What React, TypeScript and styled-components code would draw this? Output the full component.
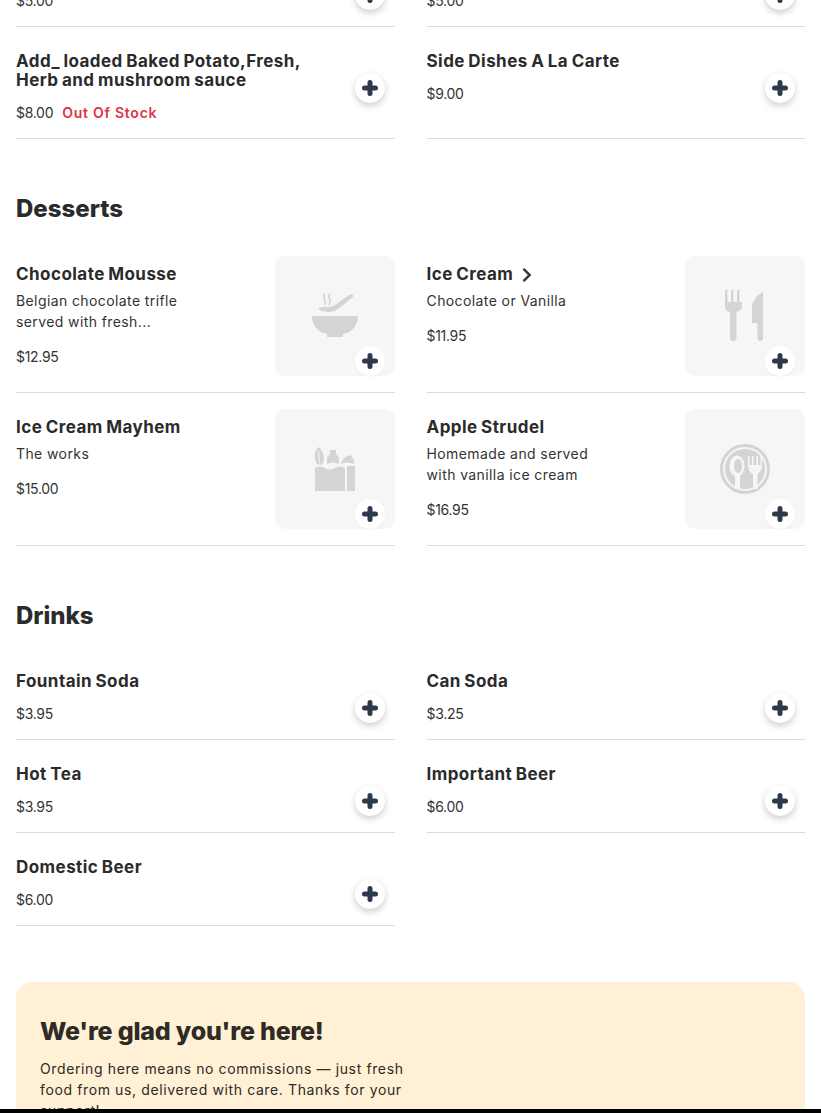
import React from 'react';
import styled, { createGlobalStyle } from 'styled-components';
import { FaChevronRight } from 'react-icons/fa';

const GlobalStyle = createGlobalStyle`
  html, body {
    margin: 0;
    height: 1113px;
    overflow: hidden;
    background: #fff;
    font-family: Inter, "Open Sans", "Liberation Sans", sans-serif;
  }
  * { box-sizing: border-box; }
`;

const Page = styled.div`
  margin-top: -66px;
  padding: 0 16px;
`;

const Section = styled.section`
  margin-bottom: 53px;
`;

const SectionTitle = styled.h2`
  margin: 0 0 15px;
  padding-top: 1px;
  font-size: 24px;
  line-height: 32px;
  font-weight: 800;
  color: #2b2b2b;
`;

const Grid = styled.div`
  display: grid;
  grid-template-columns: 1fr 1fr;
  column-gap: 32px;
`;

const Item = styled.article<{ $image?: boolean }>`
  position: relative;
  display: flex;
  justify-content: space-between;
  align-items: flex-start;
  border-bottom: 1px solid #dcdcdc;
  padding: ${(p) => (p.$image ? '16px 0' : '24px 0 15px')};
`;

const Info = styled.div<{ $image?: boolean }>`
  padding-top: ${(p) => (p.$image ? '8px' : '0')};
  min-width: 0;
`;

const Title = styled.h3`
  display: flex;
  align-items: center;
  gap: 6px;
  margin: 0 0 -2px;
  padding-top: 1px;
  max-width: 310px;
  min-height: 20px;
  font-size: 17px;
  line-height: 19px;
  font-weight: 700;
  letter-spacing: 0.45px;
  word-spacing: -1px;
  color: #2b2b2b;
`;

const Description = styled.p`
  margin: 8px 0 0;
  max-width: 185px;
  font-size: 14px;
  line-height: 21px;
  letter-spacing: 0.4px;
  color: #333;
`;

const PriceRow = styled.div`
  display: flex;
  gap: 9px;
  margin-top: 14px;
  font-size: 14px;
  line-height: 21px;
  letter-spacing: -0.3px;
  color: #333;
`;

const OutOfStock = styled.span`
  font-weight: 600;
  letter-spacing: 0.75px;
  color: #dc3545;
`;

const Thumb = styled.div`
  position: relative;
  flex: none;
  display: flex;
  align-items: center;
  justify-content: center;
  width: 120px;
  height: 120px;
  border-radius: 10px;
  background: #f6f6f6;
`;

const AddButton = styled.button<{ $onImage?: boolean }>`
  position: absolute;
  right: 10px;
  ${(p) => (p.$onImage ? 'bottom: 0;' : 'top: 46px;')}
  display: flex;
  align-items: center;
  justify-content: center;
  width: 30px;
  height: 30px;
  padding: 0;
  border: 0;
  border-radius: 50%;
  background: #fff;
  box-shadow: ${(p) => (p.$onImage ? '0 1px 3px rgba(0,0,0,0.04)' : '0 3px 7px rgba(0,0,0,0.2)')};
`;

const Arrow = styled(FaChevronRight)`
  font-size: 16px;
  color: #2c3a4b;
`;

const Banner = styled.aside`
  height: 200px;
  margin-top: 56px;
  padding: 32px 24px;
  border-radius: 16px;
  background: #fff0d6;
  color: #2e2a25;
`;

const BannerTitle = styled.h2`
  margin: 0 0 10px;
  font-size: 25px;
  line-height: 34px;
  font-weight: 800;
  letter-spacing: -0.2px;
`;

const BannerText = styled.p`
  margin: 0;
  max-width: 380px;
  font-size: 14px;
  line-height: 21px;
  letter-spacing: 0.62px;
`;

const BottomBar = styled.div`
  position: fixed;
  left: 0;
  right: 0;
  bottom: 0;
  height: 4px;
  background: #000;
`;

const IconSvg = styled.svg`
  width: 60px;
  height: 60px;
  fill: #d4d4d4;
`;

const PlusSvg = styled.svg`
  width: 18px;
  height: 18px;
  stroke: #2c3a4b;
  stroke-width: 5;
  stroke-linecap: round;
`;

function PlusIcon() {
  return (
    <PlusSvg viewBox="0 0 18 18">
      <path d="M9 3.5V14.5M3.5 9H14.5" />
    </PlusSvg>
  );
}

function BowlIcon() {
  return (
    <IconSvg viewBox="30 30 60 60">
      <path d="M37 60H83C83 70 76 77 68 78V81H52V78C44 77 37 70 37 60Z" />
      <path d="M43 52C49 50 56 52 60 49L74 39Q79 37 78 41L63 53C58 57 46 57 43 52Z" />
      <path d="M50 38C46 41 53 44 49 49M55 38C51 41 58 44 54 49" fill="none" stroke="#d4d4d4" strokeWidth="1.6" />
    </IconSvg>
  );
}

function CutleryIcon() {
  return (
    <IconSvg viewBox="30 30 60 60">
      <path d="M40 34H42.5V46H46V34H48.5V46H52V34H54.5V46H57V50C57 54 54 55 51.5 56V82Q51.5 85 48 85Q45 85 45 82V56C42 55 40 54 40 50Z" />
      <path d="M78 36V82Q78 85 75 85Q72.5 85 72.5 82V67H67V52C67 45 72 39 78 36Z" />
    </IconSvg>
  );
}

function GroceryIcon() {
  return (
    <IconSvg viewBox="30 30 60 60">
      <path d="M40 59Q45 56 50 59T60 59T70 59V82H40Z" />
      <path d="M72 57H80V82H72Z" />
      <path d="M42 55C38 49 40 42 43 38C48 41 51 49 47 56Z" />
      <path d="M43.5 42C44 46 44 50 44.500 54" fill="none" stroke="#f6f6f6" strokeWidth="1" />
      <path d="M52 55V48L55 45V41H61V45L64 48V55Q58 52 52 55Z" />
      <path d="M66 55C67 50 71 47 75 46C78 48 80 52 79 55Q72 52 66 55Z" />
    </IconSvg>
  );
}

function PlateIcon() {
  return (
    <IconSvg viewBox="30 30 60 60">
      <circle cx="60" cy="60" r="23.5" fill="none" stroke="#d4d4d4" strokeWidth="3" />
      <circle cx="60" cy="60" r="20" />
      <ellipse cx="52" cy="57" rx="7.5" ry="10.5" fill="#f6f6f6" />
      <ellipse cx="53" cy="57" rx="4" ry="7" />
      <path d="M50 66H55V80H50Z" fill="#f6f6f6" />
      <path d="M63 47H64.500V56H67V47H68.500V56H71.500V47H73V56H75.500V47H77V56C77 61 74.500 64 72.500 65V80H68V65C65.500 64 63 61 63 56Z" fill="#f6f6f6" />
    </IconSvg>
  );
}

type MenuEntry = {
  title: string;
  price: string;
  description?: string;
  soldOut?: boolean;
  arrow?: boolean;
  icon?: React.ReactNode;
};

function MenuItem({ entry }: { entry: MenuEntry }) {
  const hasImage = Boolean(entry.icon);
  return (
    <Item $image={hasImage}>
      <Info $image={hasImage}>
        <Title>
          {entry.title}
          {entry.arrow && <Arrow />}
        </Title>
        {entry.description && <Description>{entry.description}</Description>}
        <PriceRow>
          {entry.price}
          {entry.soldOut && <OutOfStock>Out Of Stock</OutOfStock>}
        </PriceRow>
      </Info>
      {hasImage ? (
        <Thumb>
          {entry.icon}
          <AddButton $onImage aria-label="Add">
            <PlusIcon />
          </AddButton>
        </Thumb>
      ) : (
        <AddButton aria-label="Add">
          <PlusIcon />
        </AddButton>
      )}
    </Item>
  );
}

const sides: MenuEntry[] = [
  { title: '', price: '$5.00' },
  { title: '', price: '$5.00' },
  { title: 'Add_ loaded Baked Potato,Fresh, Herb and mushroom sauce', price: '$8.00', soldOut: true },
  { title: 'Side Dishes A La Carte', price: '$9.00' },
];

const desserts: MenuEntry[] = [
  {
    title: 'Chocolate Mousse',
    description: 'Belgian chocolate trifle served with fresh...',
    price: '$12.95',
    icon: <BowlIcon />,
  },
  {
    title: 'Ice Cream',
    arrow: true,
    description: 'Chocolate or Vanilla',
    price: '$11.95',
    icon: <CutleryIcon />,
  },
  { title: 'Ice Cream Mayhem', description: 'The works', price: '$15.00', icon: <GroceryIcon /> },
  {
    title: 'Apple Strudel',
    description: 'Homemade and served with vanilla ice cream',
    price: '$16.95',
    icon: <PlateIcon />,
  },
];

const drinks: MenuEntry[] = [
  { title: 'Fountain Soda', price: '$3.95' },
  { title: 'Can Soda', price: '$3.25' },
  { title: 'Hot Tea', price: '$3.95' },
  { title: 'Important Beer', price: '$6.00' },
  { title: 'Domestic Beer', price: '$6.00' },
];

function MenuGrid({ entries }: { entries: MenuEntry[] }) {
  return (
    <Grid>
      {entries.map((entry, i) => (
        <MenuItem key={i} entry={entry} />
      ))}
    </Grid>
  );
}

export default function App() {
  return (
    <>
      <GlobalStyle />
      <Page>
        <Section>
          <MenuGrid entries={sides} />
        </Section>
        <Section>
          <SectionTitle>Desserts</SectionTitle>
          <MenuGrid entries={desserts} />
        </Section>
        <Section>
          <SectionTitle>Drinks</SectionTitle>
          <MenuGrid entries={drinks} />
        </Section>
        <Banner>
          <BannerTitle>We're glad you're here!</BannerTitle>
          <BannerText>
            Ordering here means no commissions — just fresh food from us, delivered with care. Thanks for your support!
          </BannerText>
        </Banner>
      </Page>
      <BottomBar />
    </>
  );
}
